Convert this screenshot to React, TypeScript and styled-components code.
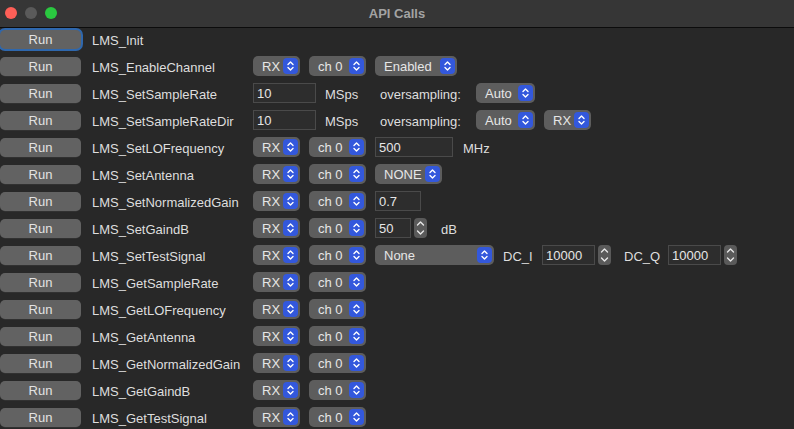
import React from 'react';
import styled, { createGlobalStyle } from 'styled-components';

const GlobalStyle = createGlobalStyle`
    html, body {
        margin: 0;
        padding: 0;
        background: #282828;
    }
    body {
        font-family: "Liberation Sans", Arial, sans-serif;
        font-size: 13px;
        color: #dedede;
    }
`;

const Window = styled.div`
    width: 794px;
    height: 429px;
    background: #282828;
    overflow: hidden;
    display: flex;
    flex-direction: column;
`;

const TitleBar = styled.div`
    height: 27px;
    flex: 0 0 27px;
    background: #363636;
    border-bottom: 1px solid #0c0c0c;
    position: relative;
    display: flex;
    align-items: center;
    justify-content: center;
`;

const Lights = styled.div`
    position: absolute;
    left: 5px;
    top: 7px;
    display: flex;
    gap: 8px;
`;

const Light = styled.span<{ $color: string }>`
    width: 12px;
    height: 12px;
    border-radius: 50%;
    background: ${p => p.$color};
`;

const Title = styled.div`
    font-weight: bold;
    font-size: 13px;
    color: #a3a3a3;
`;

const Body = styled.div`
    padding-top: 1px;
    display: flex;
    flex-direction: column;
    gap: 7px;
`;

const Row = styled.div`
    height: 20px;
    display: flex;
    align-items: center;
`;

const RunButton = styled.button<{ $focused?: boolean }>`
    width: 81px;
    height: 19px;
    flex: 0 0 81px;
    margin-right: 11px;
    border: none;
    border-radius: 5px;
    background: #626262;
    color: #e2e2e2;
    font-family: inherit;
    font-size: 13px;
    padding: 0;
    box-shadow: ${p => p.$focused ? '0 0 0 2px #2e67ad' : '0 0.5px 0 #3a3a3a'};
`;

const FuncName = styled.div`
    width: 161px;
    flex: 0 0 161px;
    padding-top: 2px;
    white-space: nowrap;
`;

const Controls = styled.div`
    display: flex;
    align-items: center;
    gap: 9px;
`;

const SelectBox = styled.div<{ $w: number }>`
    width: ${p => p.$w}px;
    height: 20px;
    box-sizing: border-box;
    border-radius: 5px;
    background: #5d5d5d;
    display: flex;
    align-items: center;
    justify-content: space-between;
    padding: 0 2px 0 9px;
    color: #e6e6e6;
`;

const Chevrons = styled.span`
    width: 15px;
    height: 16px;
    border-radius: 4px;
    background: #3358dc;
    display: flex;
    align-items: center;
    justify-content: center;
`;

const TextInput = styled.div<{ $w: number }>`
    width: ${p => p.$w}px;
    height: 20px;
    box-sizing: border-box;
    border: 1px solid #4a4a4a;
    background: #2d2d2d;
    padding: 2px 0 0 3px;
    color: #e6e6e6;
`;

const Spin = styled.div`
    display: flex;
    align-items: center;
    gap: 3px;
    margin-right: 4px;
`;

const Stepper = styled.span`
    width: 13px;
    height: 20px;
    border-radius: 4px;
    background: #5a5a5a;
    display: flex;
    flex-direction: column;
    align-items: center;
    justify-content: space-between;
    padding: 3px 0;
    box-sizing: border-box;
`;

const Caption = styled.span<{ $w?: number }>`
    display: inline-block;
    width: ${p => p.$w ? `${p.$w}px` : 'auto'};
    padding-top: 2px;
    margin-left: ${p => p.$w ? 0 : 1}px;
    white-space: nowrap;
`;

const UpDown = () => (
    <svg width="9" height="12" viewBox="0 0 9 12">
        <path d="M2 4.5 L4.5 2 L7 4.5" stroke="#fff" strokeWidth="1.4" fill="none" strokeLinecap="round" strokeLinejoin="round" />
        <path d="M2 7.5 L4.5 10 L7 7.5" stroke="#fff" strokeWidth="1.4" fill="none" strokeLinecap="round" strokeLinejoin="round" />
    </svg>
);

const Chev: React.FC<{ down?: boolean }> = ({ down }) => (
    <svg width="9" height="5" viewBox="0 0 9 5">
        <path d={down ? 'M1.5 1 L4.5 4 L7.5 1' : 'M1.5 4 L4.5 1 L7.5 4'} stroke="#e8e8e8" strokeWidth="1.4" fill="none" strokeLinecap="round" strokeLinejoin="round" />
    </svg>
);

const Select: React.FC<{ w: number; value: string }> = ({ w, value }) => (
    <SelectBox $w={w}>
        <span style={{ paddingTop: 1 }}>{value}</span>
        <Chevrons><UpDown /></Chevrons>
    </SelectBox>
);

const SpinBox: React.FC<{ w: number; value: string }> = ({ w, value }) => (
    <Spin>
        <TextInput $w={w}>{value}</TextInput>
        <Stepper><Chev /><Chev down /></Stepper>
    </Spin>
);

const Dir = () => <Select w={47} value="RX" />;
const Ch = () => <Select w={57} value="ch 0" />;

const rows: { name: string; controls?: React.ReactNode }[] = [
    { name: 'LMS_Init' },
    { name: 'LMS_EnableChannel', controls: <><Dir /><Ch /><Select w={82} value="Enabled" /></> },
    {
        name: 'LMS_SetSampleRate', controls: <>
            <TextInput $w={63}>10</TextInput>
            <Caption $w={46}>MSps</Caption>
            <Caption $w={87}>oversampling:</Caption>
            <Select w={59} value="Auto" />
        </>
    },
    {
        name: 'LMS_SetSampleRateDir', controls: <>
            <TextInput $w={63}>10</TextInput>
            <Caption $w={46}>MSps</Caption>
            <Caption $w={87}>oversampling:</Caption>
            <Select w={59} value="Auto" />
            <Dir />
        </>
    },
    { name: 'LMS_SetLOFrequency', controls: <><Dir /><Ch /><TextInput $w={78}>500</TextInput><Caption>MHz</Caption></> },
    { name: 'LMS_SetAntenna', controls: <><Dir /><Ch /><Select w={67} value="NONE" /></> },
    { name: 'LMS_SetNormalizedGain', controls: <><Dir /><Ch /><TextInput $w={46}>0.7</TextInput></> },
    { name: 'LMS_SetGaindB', controls: <><Dir /><Ch /><SpinBox w={36} value="50" /><Caption>dB</Caption></> },
    {
        name: 'LMS_SetTestSignal', controls: <>
            <Dir /><Ch /><Select w={119} value="None" />
            <Caption $w={30}>DC_I</Caption>
            <SpinBox w={53} value="10000" />
            <Caption $w={35}>DC_Q</Caption>
            <SpinBox w={53} value="10000" />
        </>
    },
    { name: 'LMS_GetSampleRate', controls: <><Dir /><Ch /></> },
    { name: 'LMS_GetLOFrequency', controls: <><Dir /><Ch /></> },
    { name: 'LMS_GetAntenna', controls: <><Dir /><Ch /></> },
    { name: 'LMS_GetNormalizedGain', controls: <><Dir /><Ch /></> },
    { name: 'LMS_GetGaindB', controls: <><Dir /><Ch /></> },
    { name: 'LMS_GetTestSignal', controls: <><Dir /><Ch /></> },
];

const App: React.FC = () => (
    <Window>
        <GlobalStyle />
        <TitleBar>
            <Lights>
                <Light $color="#fe5f57" />
                <Light $color="#5a5a5a" />
                <Light $color="#2ac840" />
            </Lights>
            <Title>API Calls</Title>
        </TitleBar>
        <Body>
            {rows.map((r, i) => (
                <Row key={r.name}>
                    <RunButton $focused={i === 0}>Run</RunButton>
                    <FuncName>{r.name}</FuncName>
                    {r.controls && <Controls>{r.controls}</Controls>}
                </Row>
            ))}
        </Body>
    </Window>
);

export default App;
